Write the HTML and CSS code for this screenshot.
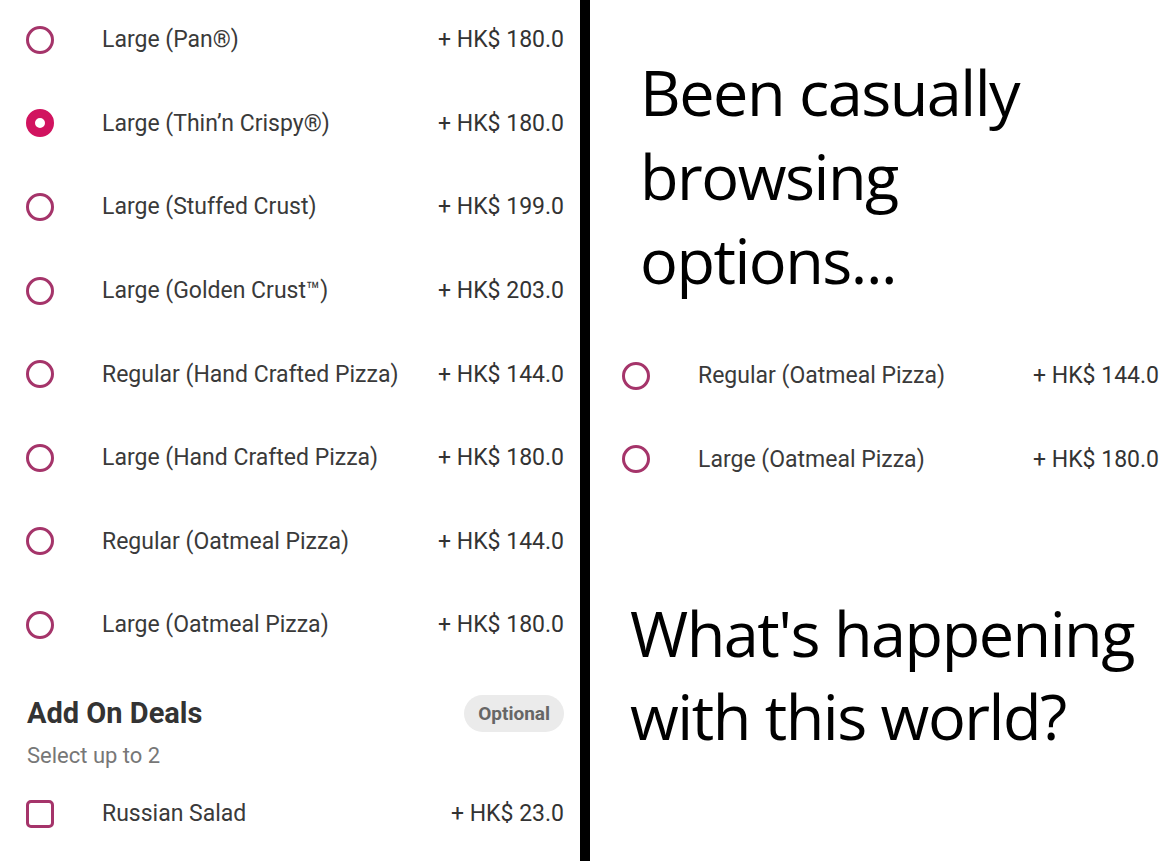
FILE: index.html
```
<!DOCTYPE html>
<html>

<head>
    <title>Browsing options</title>
    <link rel="stylesheet" href="styles.css">
</head>

<body>
    <div class="meme">
        <div class="menu-panel">
            <div class="option-list">
                <div class="option-row">
                    <span class="radio"></span>
                    <span class="option-name">Large (Pan®)</span>
                    <span class="option-price">+ HK$ 180.0</span>
                </div>
                <div class="option-row">
                    <span class="radio checked"></span>
                    <span class="option-name">Large (Thin’n Crispy®)</span>
                    <span class="option-price">+ HK$ 180.0</span>
                </div>
                <div class="option-row">
                    <span class="radio"></span>
                    <span class="option-name">Large (Stuffed Crust)</span>
                    <span class="option-price">+ HK$ 199.0</span>
                </div>
                <div class="option-row">
                    <span class="radio"></span>
                    <span class="option-name">Large (Golden Crust™)</span>
                    <span class="option-price">+ HK$ 203.0</span>
                </div>
                <div class="option-row">
                    <span class="radio"></span>
                    <span class="option-name">Regular (Hand Crafted Pizza)</span>
                    <span class="option-price">+ HK$ 144.0</span>
                </div>
                <div class="option-row">
                    <span class="radio"></span>
                    <span class="option-name">Large (Hand Crafted Pizza)</span>
                    <span class="option-price">+ HK$ 180.0</span>
                </div>
                <div class="option-row">
                    <span class="radio"></span>
                    <span class="option-name">Regular (Oatmeal Pizza)</span>
                    <span class="option-price">+ HK$ 144.0</span>
                </div>
                <div class="option-row">
                    <span class="radio"></span>
                    <span class="option-name">Large (Oatmeal Pizza)</span>
                    <span class="option-price">+ HK$ 180.0</span>
                </div>
            </div>

            <div class="section-head">
                <h2>Add On Deals</h2>
                <span class="pill">Optional</span>
            </div>
            <div class="section-note">Select up to 2</div>

            <div class="option-row addon-row">
                <span class="checkbox"></span>
                <span class="option-name">Russian Salad</span>
                <span class="option-price">+ HK$ 23.0</span>
            </div>
        </div>

        <div class="divider"></div>

        <div class="caption-panel">
            <p class="caption top-caption">Been casually browsing options...</p>

            <div class="option-list crop-list">
                <div class="option-row">
                    <span class="radio"></span>
                    <span class="option-name">Regular (Oatmeal Pizza)</span>
                    <span class="option-price">+ HK$ 144.0</span>
                </div>
                <div class="option-row">
                    <span class="radio"></span>
                    <span class="option-name">Large (Oatmeal Pizza)</span>
                    <span class="option-price">+ HK$ 180.0</span>
                </div>
            </div>

            <p class="caption bottom-caption">What's happening with this world?</p>
        </div>
    </div>
</body>

</html>
```

FILE: styles.css
```
body {
    margin: 0;
    padding: 0;
    background-color: #fff;
    font-family: Roboto, "Liberation Sans", sans-serif;
    overflow: hidden;
}

.meme {
    display: flex;
    height: 861px;
}

.menu-panel {
    width: 580px;
    flex-shrink: 0;
}

.divider {
    width: 10px;
    flex-shrink: 0;
    background-color: #000;
}

.caption-panel {
    flex: 1;
}

/* option rows */

.option-list {
    margin-top: -2px;
}

.option-row {
    display: grid;
    grid-template-columns: 28px minmax(0, 1fr) auto;
    column-gap: 48px;
    align-items: center;
    height: 83.6px;
    padding: 0 16px 0 26px;
    font-size: 23px;
    color: #3a3a3a;
    white-space: nowrap;
}

.radio {
    width: 28px;
    height: 28px;
    box-sizing: border-box;
    border: 3px solid #a5346a;
    border-radius: 50%;
}

.radio.checked {
    border: 9px solid #d1135f;
}

.checkbox {
    width: 28px;
    height: 28px;
    box-sizing: border-box;
    border: 3px solid #a5346a;
    border-radius: 5px;
}

.option-price {
    color: #333;
}

/* add on section */

.section-head {
    display: flex;
    align-items: center;
    justify-content: space-between;
    padding: 0 16px 0 27px;
    margin-top: 28px;
}

.section-head h2 {
    margin: 0;
    font-size: 29px;
    font-weight: bold;
    color: #333;
}

.pill {
    padding: 7px 14px;
    border-radius: 19px;
    background-color: #ebebeb;
    color: #666;
    font-size: 19px;
    font-weight: bold;
}

.section-note {
    padding-left: 27px;
    margin-top: 11px;
    font-size: 22px;
    color: #777;
}

.addon-row {
    height: 74px;
    margin-top: 9px;
}

/* captions */

.caption {
    margin: 0;
    font-family: "Open Sans", "Noto Sans", sans-serif;
    font-size: 63px;
    line-height: 84px;
    letter-spacing: -1.5px;
    color: #000;
}

.top-caption {
    padding: 50px 60px 0 50px;
}

.crop-list {
    margin-top: 32px;
}

.crop-list .option-row {
    padding: 0 14px 0 32px;
}

.bottom-caption {
    padding: 90px 0 0 40px;
    line-height: 83px;
}
```
